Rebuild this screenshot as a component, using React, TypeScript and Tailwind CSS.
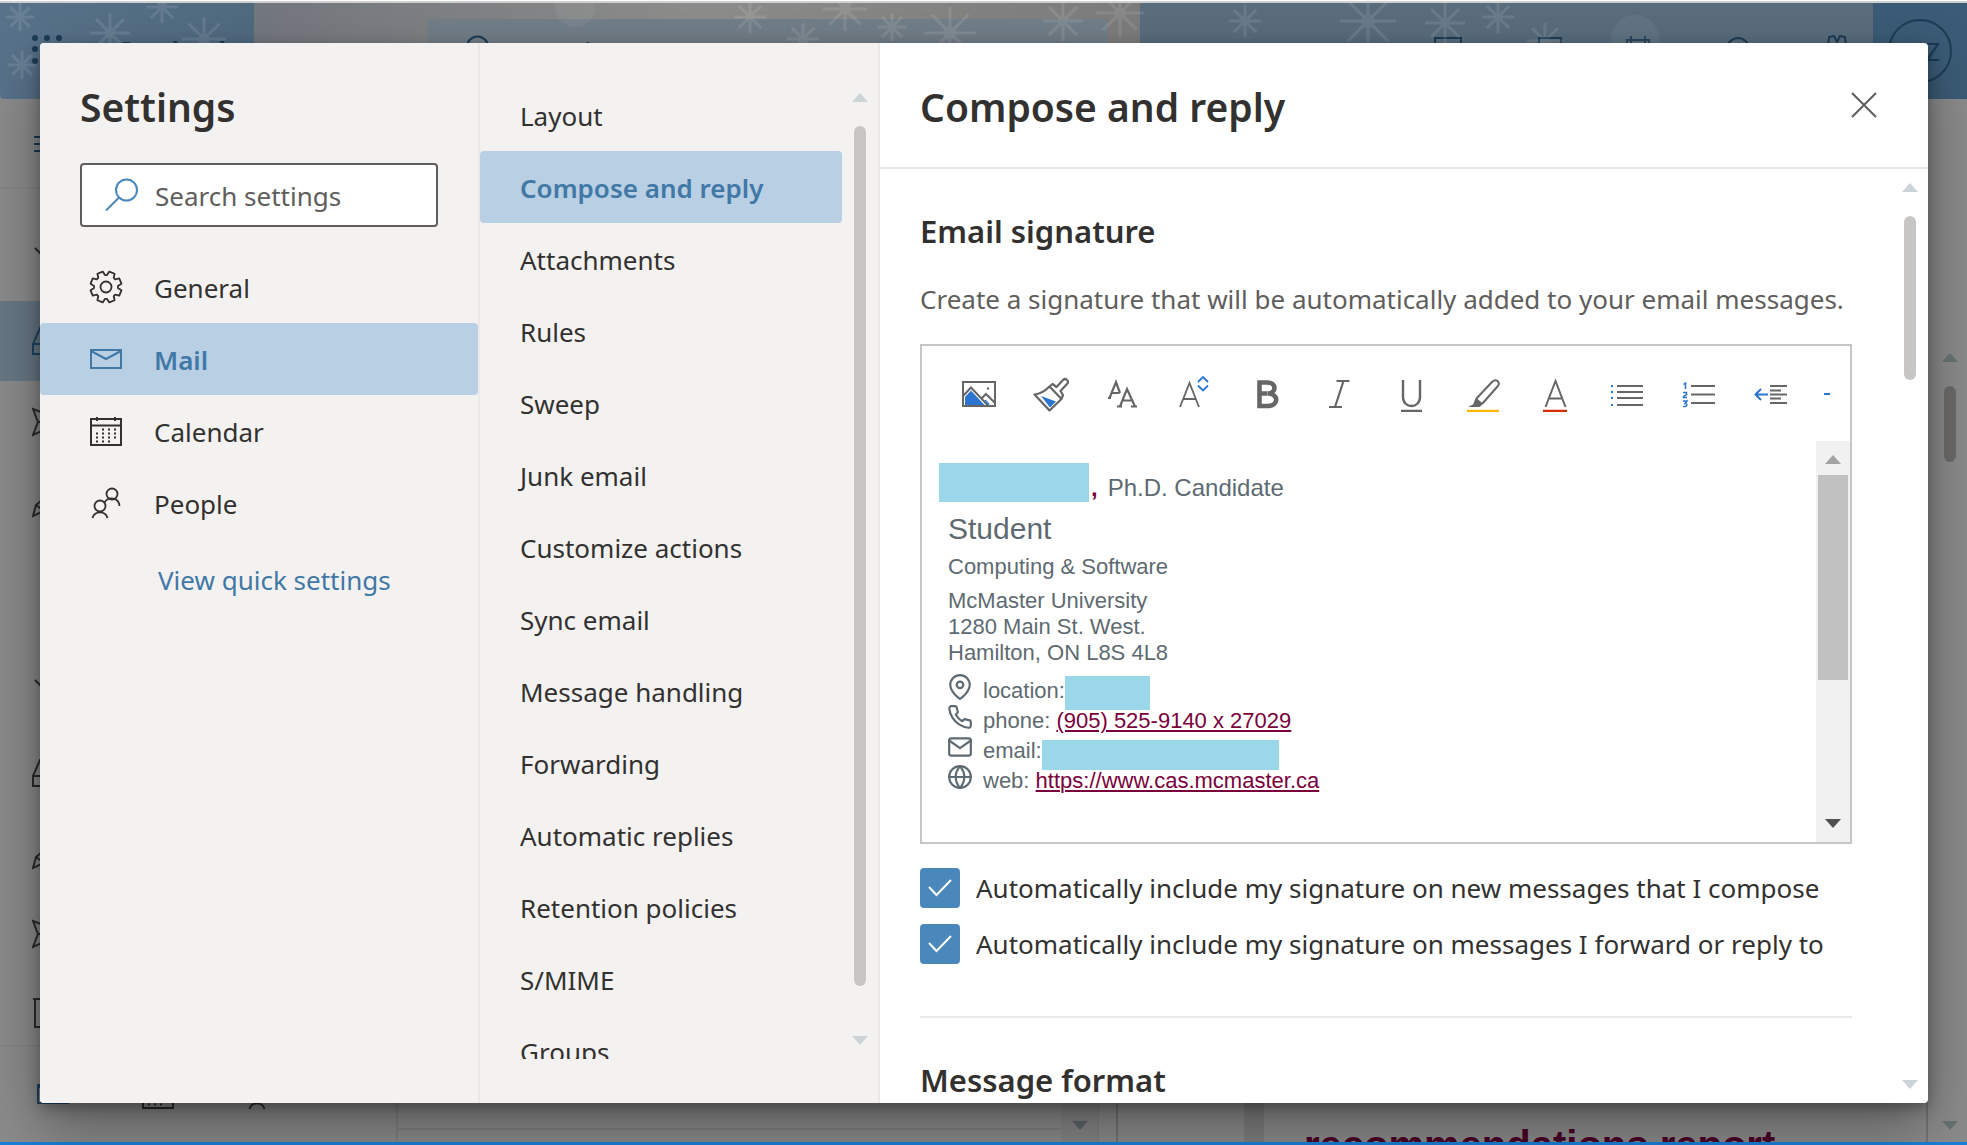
import React from 'react';

type IconProps = { className?: string };

const GearIcon = ({ className }: IconProps) => {
  const pts: string[] = [];
  for (let i = 0; i < 8; i++) {
    const at = (deg: number, r: number) => {
      const a = ((i * 45 + deg) * Math.PI) / 180;
      return `${(17 + r * Math.sin(a)).toFixed(2)},${(17 + r * Math.cos(a)).toFixed(2)}`;
    };
    pts.push(at(-5, 12), at(5, 12), at(12, 15.8), at(33, 15.8), at(40, 12));
  }
  return (
    <svg viewBox="0 0 34 34" className={className} fill="none" stroke="currentColor" strokeWidth="1.8" strokeLinejoin="round">
      <polygon points={pts.join(' ')} />
      <circle cx="17" cy="17" r="5.5" />
    </svg>
  );
};

const EnvelopeIcon = ({ className }: IconProps) => (
  <svg viewBox="0 0 34 34" className={className} fill="none" stroke="currentColor" strokeWidth="2">
    <path d="M2 8h30v18H2zM2 9l15 8 15-8" />
  </svg>
);

const CalendarIcon = ({ className }: IconProps) => (
  <svg viewBox="0 0 34 34" className={className} fill="none" stroke="currentColor" strokeWidth="2">
    <path d="M2 5h30v26H2zM2 11.500h30M8 3v4M26 3v4" />
    <path d="M13 15.500h2M19 15.500h2M25 15.500h2M7 19.500h2M13 19.500h2M19 19.500h2M25 19.500h2M7 23.500h2M13 23.500h2M19 23.500h2M25 23.500h2M7 27.500h2M13 27.500h2M19 27.500h2" />
  </svg>
);

const PeopleIcon = ({ className }: IconProps) => (
  <svg viewBox="0 0 34 34" className={className} fill="none" stroke="currentColor" strokeWidth="1.8">
    <circle cx="23" cy="8" r="5.500" />
    <circle cx="11" cy="20" r="5.500" />
    <path d="M15.500 16.500a8 8 0 0 1 15 3.500M3.500 32a7.800 7.800 0 0 1 15 0" />
  </svg>
);

const SearchIcon = ({ className }: IconProps) => (
  <svg viewBox="0 0 34 34" className={className} fill="none" stroke="currentColor" strokeWidth="2">
    <circle cx="21.500" cy="12" r="10.500" />
    <path d="M14 19.500L1 32.500" />
  </svg>
);

const Triangle = ({ down, className }: { down?: boolean; className?: string }) => (
  <svg viewBox="0 0 16 9" className={`h-[9px] w-4 shrink-0 ${className ?? ''}`} fill="currentColor">
    <path d={down ? 'M0 0h16L8 9z' : 'M0 9h16L8 0z'} />
  </svg>
);

const stroke = '#666666';
const blue = '#2b74d0';

const tools: { label: string; icon: React.ReactNode }[] = [
  {
    label: 'Insert pictures inline',
    icon: (
      <>
        <path d="M2 6h32v24H2z" stroke={stroke} strokeWidth="2" fill="none" />
        <path d="M4 29V21l6-6.500L23.500 29z" fill={blue} />
        <path d="M2 20l8-8.500L27 29.500M20 23l5-5 9 9" stroke={stroke} strokeWidth="2" fill="none" />
        <path d="M24 24l4 4.500" stroke={blue} strokeWidth="1.500" />
        <circle cx="27" cy="12.500" r="1.200" fill={stroke} />
      </>
    ),
  },
  {
    label: 'Format painter',
    icon: (
      <>
        <path d="M8 20l15 5.500-6 6z" fill={blue} />
        <path
          d="M1.500 18.500C8 18 12 15 16.500 10.500L28.500 23 16.500 34.500zM16.500 10.500l3-2.500 4 3 6.500-7a2.800 2.800 0 0 1 4 4l-6.500 7 2.500 4-1.500 4"
          stroke={stroke}
          strokeWidth="2.200"
          fill="none"
          strokeLinejoin="round"
        />
      </>
    ),
  },
  {
    label: 'Font',
    icon: (
      <path
        d="M4.500 22L11 6L15 17M6.500 17h8M3 22h3M15 30.500L22 13l8 17.500M17 24.500h10M12 30.500h5M26 30.500h6"
        stroke={stroke}
        strokeWidth="2.200"
        fill="none"
      />
    ),
  },
  {
    label: 'Font size',
    icon: (
      <>
        <path d="M3 31L12.500 7L22 31M6.500 23h12" stroke={stroke} strokeWidth="1.800" fill="none" />
        <path d="M21 6l5-5 5 5M21 9.500l5 5 5-5" stroke={blue} strokeWidth="1.800" fill="none" />
      </>
    ),
  },
  {
    label: 'Bold',
    icon: (
      <path
        d="M10.500 6.500h7.500c10 0 9.500 10.500 1 11 11.500.5 10.500 12.500-.5 12.500h-8zM10.500 17.500h8"
        stroke={stroke}
        strokeWidth="4.600"
        fill="none"
      />
    ),
  },
  {
    label: 'Italic',
    icon: <path d="M15.500 5h13M8 31h13M22.500 5l-8.500 26" stroke={stroke} strokeWidth="2.200" fill="none" />,
  },
  {
    label: 'Underline',
    icon: <path d="M10 4v17c0 12 17 12 17 0V4M8 35h21" stroke={stroke} strokeWidth="2.400" fill="none" />,
  },
  {
    label: 'Text highlight color',
    icon: (
      <>
        <path d="M11 23L27 6c4-4 9 0 5.500 4.500L17 28M11 23l6 5" stroke={stroke} strokeWidth="2" fill="none" />
        <path d="M10.500 22.500l7 6-3 2.500H3l5-2.500z" fill={stroke} />
        <path d="M2 35h32" stroke="#ffb900" strokeWidth="2.500" />
      </>
    ),
  },
  {
    label: 'Font color',
    icon: (
      <>
        <path d="M8.500 31L18.500 5l10 26M12.500 22.500h12" stroke={stroke} strokeWidth="2" fill="none" />
        <path d="M6 35h24" stroke="#d92a0a" strokeWidth="2.500" />
      </>
    ),
  },
  {
    label: 'Bullets',
    icon: (
      <>
        <path d="M8 10h26M8 16h26M8 22h26M8 29h26" stroke={stroke} strokeWidth="2" />
        <path d="M2 10h2M2 16h2M2 22h2M2 29h2" stroke={blue} strokeWidth="2" />
      </>
    ),
  },
  {
    label: 'Numbering',
    icon: (
      <>
        <path d="M10 10h24M10 18.500h24M10 27h24" stroke={stroke} strokeWidth="2" />
        <path
          d="M2.500 8.500l2-1.500v6M2 16.500h3.500v2L2.500 20.500v1H6M2 25h4l-2 2.500c3 0 2.500 3.500-2 3"
          stroke={blue}
          strokeWidth="1.500"
          fill="none"
        />
      </>
    ),
  },
  {
    label: 'Decrease indent',
    icon: (
      <>
        <path d="M17 10h17M17 14.500h11M17 18.500h17M17 22.500h11M17 27h17" stroke={stroke} strokeWidth="2" />
        <path d="M15 18.500H3M8 13l-5.500 5.500L8 24" stroke={blue} strokeWidth="2" fill="none" />
      </>
    ),
  },
  { label: 'Increase indent', icon: <path d="M1 18h6" stroke={blue} strokeWidth="2" /> },
];

const mailPages = [
  'Layout',
  'Compose and reply',
  'Attachments',
  'Rules',
  'Sweep',
  'Junk email',
  'Customize actions',
  'Sync email',
  'Message handling',
  'Forwarding',
  'Automatic replies',
  'Retention policies',
  'S/MIME',
  'Groups',
];

const sections = [
  { name: 'General', Icon: GearIcon },
  { name: 'Mail', Icon: EnvelopeIcon },
  { name: 'Calendar', Icon: CalendarIcon },
  { name: 'People', Icon: PeopleIcon },
];

const contactPaths = {
  location: (
    <>
      <path d="M21 10c0 7-9 13-9 13s-9-6-9-13a9 9 0 0 1 18 0z" />
      <circle cx="12" cy="10" r="3" />
    </>
  ),
  phone: (
    <path d="M22 16.920v3a2 2 0 0 1-2.180 2 19.790 19.790 0 0 1-8.630-3.070 19.500 19.500 0 0 1-6-6 19.790 19.790 0 0 1-3.070-8.670A2 2 0 0 1 4.110 2h3a2 2 0 0 1 2 1.720 12.840 12.840 0 0 0 .7 2.810 2 2 0 0 1-.45 2.110L8.090 9.910a16 16 0 0 0 6 6l1.270-1.270a2 2 0 0 1 2.110-.45 12.840 12.840 0 0 0 2.810.7A2 2 0 0 1 22 16.920z" />
  ),
  email: (
    <>
      <path d="M4 4h16c1.100 0 2 .9 2 2v12c0 1.100-.9 2-2 2H4c-1.100 0-2-.9-2-2V6c0-1.100.9-2 2-2z" />
      <path d="M22 6l-10 7L2 6" />
    </>
  ),
  web: (
    <>
      <circle cx="12" cy="12" r="10" />
      <path d="M2 12h20M12 2a15.300 15.300 0 0 1 4 10 15.300 15.300 0 0 1-4 10 15.300 15.300 0 0 1-4-10 15.300 15.300 0 0 1 4-10z" />
    </>
  ),
};

const ContactRow = ({ kind, children }: { kind: keyof typeof contactPaths; children: React.ReactNode }) => (
  <div className="-ml-px flex h-[30px] items-start whitespace-nowrap leading-[30px]">
    <svg
      viewBox="0 0 24 24"
      className="-mt-0.5 mr-2.5 size-[26px] shrink-0"
      fill="none"
      stroke="currentColor"
      strokeWidth="2"
      strokeLinecap="round"
      strokeLinejoin="round"
    >
      {contactPaths[kind]}
    </svg>
    {children}
  </div>
);

const Flake = ({ x, y, r }: { x: number; y: number; r: number }) => (
  <g transform={`translate(${x} ${y})`}>
    {[0, 45, 90, 135].map((a) => (
      <path key={a} d={`M0 ${-r}V${r}`} transform={`rotate(${a})`} />
    ))}
    <circle r={r / 4} fill="#ffffff" stroke="none" />
  </g>
);

const Snow = () => (
  <svg className="absolute inset-0 h-full w-full opacity-10" stroke="#ffffff" strokeWidth="3" fill="none" aria-hidden="true">
    {[
      [20, 14, 14], [162, 4, 16], [204, 36, 22], [110, 30, 20], [22, 62, 14], [750, 14, 16], [845, 6, 22], [892, 24, 14], [950, 30, 26],
      [803, 36, 16], [1063, 18, 20], [1120, 10, 24], [1245, 18, 16], [1368, 18, 28], [1445, 20, 20], [1498, 14, 16], [1545, 38, 18],
    ].map(([x, y, r]) => (
      <Flake key={x} x={x} y={y} r={r} />
    ))}
    <circle cx="1635" cy="36" r="24" fill="#ffffff" fillOpacity="0.5" stroke="none" />
    <circle cx="575" cy="4" r="20" fill="#ffffff" fillOpacity="0.5" stroke="none" />
  </svg>
);

const railIcons: Record<string, React.ReactNode> = {
  chevron: <path d="M3 4l12 12L27 4" />,
  inbox: <path d="M1 30V20L8 4h18l6 16v10zM1 20h30" />,
  send: <path d="M1 5l31 12L1 31l5-13zM6 18h20" />,
  pencil: <path d="M1 32l3-11L24 4l6 6-18 17zM4 21l8 6" />,
  page: <path d="M1 3h26v28H3V3" />,
};

const RailRow = ({ icon, selected }: { icon: string; selected?: boolean }) => (
  <div className={`flex h-20 shrink-0 items-center pl-8 ${selected ? 'bg-[#677885] text-[#1f4464]' : 'text-[#2b2b2b]'}`}>
    <svg viewBox="0 0 34 34" className="size-[34px]" fill="none" stroke="currentColor" strokeWidth="2">
      {railIcons[icon]}
    </svg>
  </div>
);

const Backdrop = () => (
  <div className="absolute inset-0 flex flex-col bg-[#8b8b8b]" aria-hidden="true">
    <div className="h-[3px] shrink-0 border-t border-white bg-[#cfcfcf]" />
    <div className="relative flex h-24 shrink-0 overflow-hidden text-[#1c3c56]">
      <div className="flex w-[254px] items-start gap-[52px] rounded-bl bg-linear-to-r from-[#58728a] to-[#506a80] pl-8 pt-[31px] font-semibold">
        <svg viewBox="0 0 30 30" className="size-[30px] shrink-0" fill="currentColor">
          {[4, 15, 27].map((cy) => [3, 15, 27].map((cx) => <circle key={`${cx}-${cy}`} cx={cx} cy={cy} r="3" />))}
        </svg>
        <span className="text-[31px] leading-9">Outlook</span>
      </div>
      <div className="flex flex-1 bg-linear-to-r from-[#73777e] via-[#8d8d8b] to-[#7c7c7c] pl-[174px] pr-8 pt-4">
        <div className="flex flex-1 items-start gap-7 rounded-t bg-[#727e88] pl-7 pt-4">
          <SearchIcon className="size-[34px]" />
          <span className="leading-8">Search</span>
        </div>
      </div>
      <div className="flex w-[733px] items-start bg-[#596d7d] pl-[100px] pt-8">
        <span className="w-[190px] leading-8">Meet Now</span>
        <svg viewBox="0 0 440 30" className="h-[30px] w-[440px]" fill="none" stroke="currentColor" strokeWidth="2">
          <path d="M5 3h26v20H5zM109 3h22v20h-22zM197 5h22v22h-22zM201 1v8M215 1v8M197 11h22" />
          <circle cx="308" cy="14" r="11" />
          <path d="M391 14v-5l7 2 1-9 5-1 3 6 3-6 5 1 1 9 7-2v5M398 14v12h18V14" />
        </svg>
      </div>
      <div className="flex flex-[0_0_94px] justify-center bg-[#3b5b76] pt-4">
        <div className="flex size-16 items-center justify-end rounded-full border-2 border-[#1c3c56] pr-2.5">Z</div>
      </div>
      <Snow />
    </div>
    <div className="relative flex min-h-0 flex-1">
      <div className="flex w-[396px] flex-col">
        <div className="flex h-[90px] shrink-0 items-start border-b-2 border-[#858585] pl-[34px] pt-9">
          <svg viewBox="0 0 24 18" className="h-[18px] w-6" stroke="#1c3c56" strokeWidth="2">
            <path d="M0 2h24M0 9h24M0 16h24" />
          </svg>
        </div>
        <div className="flex min-h-0 flex-1 flex-col overflow-hidden pt-8">
          <RailRow icon="chevron" />
          <RailRow icon="inbox" selected />
          <RailRow icon="send" />
          <RailRow icon="pencil" />
          <div className="h-28 shrink-0" />
          <RailRow icon="chevron" />
          <RailRow icon="inbox" />
          <RailRow icon="pencil" />
          <RailRow icon="send" />
          <RailRow icon="page" />
        </div>
        <div className="flex h-[97px] shrink-0 items-start gap-[71px] border-t-2 border-[#858585] pl-9 pt-[30px] text-[#2b2b2b]">
          <EnvelopeIcon className="size-[34px] text-[#1f4464]" />
          <CalendarIcon className="size-[34px]" />
          <PeopleIcon className="size-[34px]" />
        </div>
      </div>
      <div className="flex flex-1 items-end border-l-2 border-[#808080]">
        <div className="h-3.5 flex-1 border-t-2 border-[#808080]" />
        <div className="flex h-full w-[37px] items-end justify-center bg-[#858585] pb-3 text-[#5f6668]">
          <Triangle down />
        </div>
        <div className="h-full w-[18px] border-l border-[#808080]" />
      </div>
      <div className="flex w-[812px] items-end overflow-hidden border-x-2 border-[#737373]">
        <div className="ml-[126px] h-full w-5 bg-[#7e7e7e]" />
        <div className="h-5 whitespace-nowrap pl-10 font-['Liberation_Sans',Arial,sans-serif] text-[40px] font-bold leading-[46px] text-[#4b0026]">
          recommendations report
        </div>
      </div>
      <div className="flex w-[39px] flex-col items-center pb-3 pl-1 pt-[254px] text-[#687373]">
        <Triangle />
        <div className="mt-6 h-[76px] w-3 rounded-full bg-[#6d6b69]" />
        <Triangle down className="mt-auto" />
      </div>
    </div>
    <div className="relative h-[3px] shrink-0 bg-[#1a80d8]" />
  </div>
);

const Option = ({ children }: { children: string }) => (
  <label className="flex h-10 items-center gap-4 whitespace-nowrap">
    <span className="grid size-10 shrink-0 place-items-center">
      <input type="checkbox" defaultChecked className="col-start-1 row-start-1 size-10 appearance-none rounded bg-[#c8c6c4] checked:bg-[#4a88bb]" />
      <svg viewBox="0 0 24 18" className="pointer-events-none col-start-1 row-start-1 h-[18px] w-6" fill="none" stroke="#ffffff" strokeWidth="2">
        <path d="M1 8l7.500 8L23 1" />
      </svg>
    </span>
    {children}
  </label>
);

export default function App() {
  return (
    <div className="relative h-screen overflow-hidden font-['Noto_Sans','Segoe_UI',sans-serif] text-[26px] leading-9 text-[#323130]">
      <Backdrop />
      <main
        role="dialog"
        aria-label="Settings"
        className="relative flex h-full pb-[42px] pl-10 pr-[39px] pt-[43px]"
      >
        <div className="flex min-w-0 flex-1 overflow-hidden rounded bg-white shadow-[0_25px_57px_rgba(0,0,0,0.35),0_5px_14px_rgba(0,0,0,0.3)]">
          <section className="flex w-[440px] shrink-0 flex-col border-r-2 border-[#ebe9e8] bg-[#f3f2f1]">
            <h1 className="px-10 pt-9 text-[39px] font-semibold leading-[56px]">Settings</h1>
            <label className="mx-10 mt-7 flex h-16 items-center gap-4 rounded border-2 border-[#605e5c] bg-white pl-[23px]">
              <SearchIcon className="size-[34px] shrink-0 text-[#4a88bb]" />
              <input
                type="search"
                aria-label="Search settings"
                placeholder="Search settings"
                className="w-full min-w-0 bg-transparent pt-0.5 outline-none placeholder:text-[#605e5c]"
              />
            </label>
            <nav className="mt-6 flex flex-col">
              {sections.map(({ name, Icon }) => (
                <button
                  key={name}
                  className={`flex h-[72px] items-center gap-[31px] rounded pl-[49px] text-left ${
                    name === 'Mail' ? 'bg-[#b8cfe4] font-semibold text-[#4178a6]' : ''
                  }`}
                >
                  <Icon className="size-[34px]" />
                  <span className="pt-0.5">{name}</span>
                </button>
              ))}
            </nav>
            <a href="#quick" className="ml-[118px] mt-[23px] text-[#4178a6]">
              View quick settings
            </a>
          </section>

          <section className="flex w-[400px] shrink-0 border-r-2 border-[#ebe9e8] bg-[#f3f2f1] pb-[44px] pt-9">
            <nav className="flex flex-1 flex-col overflow-hidden">
              {mailPages.map((p) => (
                <button
                  key={p}
                  className={`h-[72px] shrink-0 whitespace-nowrap rounded pl-10 pt-0.5 text-left ${
                    p === 'Compose and reply' ? 'bg-[#b8cfe4] font-semibold text-[#4178a6]' : ''
                  }`}
                >
                  {p}
                </button>
              ))}
            </nav>
            <div className="flex w-9 flex-col items-center pb-3.5 pt-3.5 text-[#cdd4d8]">
              <Triangle />
              <div className="mb-[50px] mt-6 w-3 flex-1 rounded-full bg-[#c8c6c4]" />
              <Triangle down />
            </div>
          </section>

          <section className="flex min-w-0 flex-1 flex-col">
            <header className="flex h-[126px] shrink-0 items-start justify-between border-b-2 border-[#ebe9e8] pl-10 pr-[51px] pt-9">
              <h2 className="text-[39px] font-semibold leading-[56px]">Compose and reply</h2>
              <button aria-label="Close" className="mt-[13px] text-[#605e5c]">
                <svg viewBox="0 0 26 26" className="size-[26px]" fill="none" stroke="currentColor" strokeWidth="2">
                  <path d="M1 1l24 24M25 1L1 25" />
                </svg>
              </button>
            </header>
            <div className="flex min-h-0 flex-1">
              <div className="min-w-0 flex-1 overflow-hidden pl-10 pt-[42px]">
                <h3 className="text-[31px] font-semibold leading-10">Email signature</h3>
                <p className="mt-[30px] whitespace-nowrap text-[#605e5c]">
                  Create a signature that will be automatically added to your email messages.
                </p>
                <div className="mt-[27px] border-2 border-[#c8c6c4]">
                  <div role="toolbar" aria-label="Formatting" className="flex h-[95px] items-center overflow-hidden pl-[21px]">
                    {tools.map((t) => (
                      <button key={t.label} aria-label={t.label} className="grid h-[62px] w-[72px] shrink-0 place-items-center last:w-[60px] last:place-items-start last:py-[13px] last:pl-4">
                        <svg viewBox="0 0 36 36" className="size-9">
                          {t.icon}
                        </svg>
                      </button>
                    ))}
                  </div>
                  <div className="flex h-[401px] font-['Liberation_Sans',Arial,sans-serif] text-[22px] leading-[26px] text-[#5e6a71]">
                    <div className="flex-1 pt-[22px]">
                      <div className="ml-[17px] flex h-10 items-start whitespace-nowrap text-2xl leading-7">
                        <span className="h-[39px] w-[150px] bg-[#9ad8e9]" />
                        <b className="ml-0.5 mt-[11px] text-[#7a003c]">,</b>
                        <span className="ml-2.5 mt-[11px]">Ph.D. Candidate</span>
                      </div>
                      <div className="pl-[26px]">
                        <div className="mt-[9px] text-[30px] leading-[34px]">Student</div>
                        <div className="mt-2">Computing &amp; Software</div>
                        <div className="mt-2">
                          McMaster University
                          <br />
                          1280 Main St. West.
                          <br />
                          Hamilton, ON L8S 4L8
                        </div>
                        <div className="mt-2.5">
                          <ContactRow kind="location">
                            location:
                            <span className="h-[34px] w-[85px] bg-[#9ad8e9]" />
                          </ContactRow>
                          <ContactRow kind="phone">
                            phone:&nbsp;
                            <a href="tel:9055259140" className="text-[#7a003c] underline decoration-2 underline-offset-2">
                              (905) 525-9140 x 27029
                            </a>
                          </ContactRow>
                          <ContactRow kind="email">
                            email:
                            <span className="mt-1 h-[30px] w-[237px] bg-[#9ad8e9]" />
                          </ContactRow>
                          <ContactRow kind="web">
                            web:&nbsp;
                            <a href="https://www.cas.mcmaster.ca" className="text-[#7a003c] underline decoration-2 underline-offset-2">
                              https://www.cas.mcmaster.ca
                            </a>
                          </ContactRow>
                        </div>
                      </div>
                    </div>
                    <div className="flex w-[34px] flex-col items-center bg-[#f1f1f1] py-3.5 text-[#a3a3a3]">
                      <Triangle />
                      <div className="mt-[11px] h-[205px] w-[30px] bg-[#c1c1c1]" />
                      <Triangle down className="mt-auto text-[#505050]" />
                    </div>
                  </div>
                </div>
                <div className="mt-6 flex flex-col gap-4">
                  <Option>Automatically include my signature on new messages that I compose</Option>
                  <Option>Automatically include my signature on messages I forward or reply to</Option>
                </div>
                <hr className="mt-[52px] border-t-2 border-[#ebe9e8]" />
                <h3 className="mt-[42px] text-[31px] font-semibold leading-10">Message format</h3>
              </div>
              <div className="flex w-[76px] shrink-0 flex-col items-center pb-3.5 pl-10 pt-3.5 text-[#cdd4d8]">
                <Triangle />
                <div className="mt-6 h-[164px] w-3 rounded-full bg-[#c8c6c4]" />
                <Triangle down className="mt-auto" />
              </div>
            </div>
          </section>
        </div>
      </main>
    </div>
  );
}
